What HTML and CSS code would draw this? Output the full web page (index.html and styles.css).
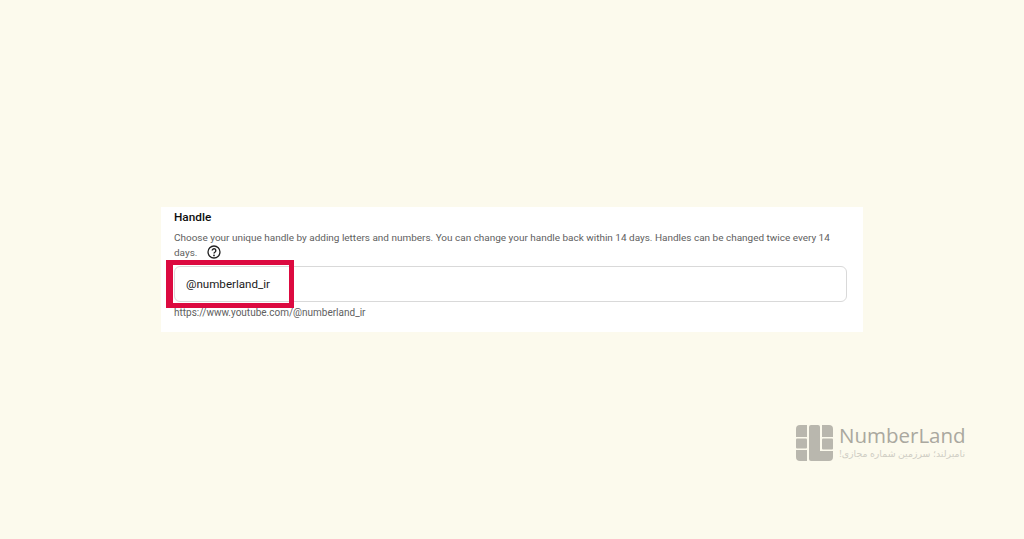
FILE: index.html
```html
<!DOCTYPE html>
<html lang="en">
<head>
<meta charset="utf-8">
<title>Handle</title>
<link rel="stylesheet" href="styles.css">
</head>
<body>
<main class="page">
  <section class="card">
    <h2 class="title">Handle</h2>
    <p class="desc">Choose your unique handle by adding letters and numbers. You can change your handle back within 14 days. Handles can be changed twice every 14 days.<svg class="help" width="14" height="14" viewBox="0 0 14 14" aria-hidden="true"><circle cx="7" cy="7" r="6" fill="none" stroke="#222" stroke-width="1.3"/><path d="M5.2 5.6a1.8 1.8 0 1 1 2.9 1.4c-.7.5-1.1.8-1.1 1.4" fill="none" stroke="#222" stroke-width="1.4"/><circle cx="7" cy="10.4" r=".9" fill="#222"/></svg></p>
    <div class="field">
      <div class="input">@numberland_ir</div>
      <div class="highlight"></div>
    </div>
    <p class="url">https://www.youtube.com/@numberland_ir</p>
  </section>
</main>
<div class="logo">
  <svg class="mark" width="37" height="37" viewBox="0 0 37 37" aria-hidden="true">
    <g fill="#b9b7ae">
      <path d="M0 4a4 4 0 0 1 4-4h7v12H0z"/>
      <rect x="0" y="13.500" width="11" height="10" rx="1"/>
      <path d="M0 25h11v11H4a4 4 0 0 1-4-4z"/>
      <path d="M15 0h7a2 2 0 0 1 2 2v24h13v6a4 4 0 0 1-4 4H15a2 2 0 0 1-2-2V2a2 2 0 0 1 2-2z"/>
      <path d="M26 0h7a4 4 0 0 1 4 4v8H26z"/>
      <rect x="26" y="13.500" width="11" height="11" rx="1"/>
    </g>
  </svg>
  <div class="brand">
    <div class="name">NumberLand</div>
    <div class="tag" dir="rtl" lang="fa">نامبرلند؛ سرزمین شماره مجازی!</div>
  </div>
</div>
</body>
</html>
```
FILE: styles.css
```css
* { box-sizing: border-box; }
html, body { margin: 0; height: 100%; }
body {
  position: relative;
  background: #fcfaed;
  font-family: Roboto, "Liberation Sans", sans-serif;
  overflow: hidden;
}
.page { padding: 207px 161px 0; }
.card {
  width: 702px;
  height: 125px;
  background: #fff;
  padding: 3px 16px 0 13px;
}
.title {
  margin: 0;
  font-size: 11.8px;
  line-height: 14px;
  font-weight: 500;
  color: #0d0d0d;
}
.desc {
  margin: 7px 0 0;
  font-size: 9.97px;
  line-height: 14.5px;
  color: #606060;
}
.help { margin: -5px 0 -5px 10px; vertical-align: 2px; }
.field { position: relative; margin-top: 6px; }
.input {
  height: 36px;
  border: 1px solid #d9d9d9;
  border-radius: 6px;
  padding: 0 11px;
  font-size: 11.6px;
  line-height: 34px;
  color: #1a1a1a;
}
.highlight {
  position: absolute;
  left: -8px;
  top: -6px;
  width: 128px;
  height: 48px;
  border: 5px solid #dc0a40;
  border-left-width: 7px;
}
.url {
  margin: 5px 0 0;
  font-size: 10px;
  line-height: 12px;
  color: #606060;
}
.logo {
  position: absolute;
  left: 796px;
  top: 425px;
  display: flex;
  gap: 6px;
}
.brand { width: 126px; }
.name {
  font-family: "Open Sans", sans-serif;
  font-size: 20.5px;
  font-weight: 400;
  line-height: 21px;
  color: #aaa89f;
}
.tag {
  margin-top: 2px;
  font-family: "Noto Sans", "DejaVu Sans", sans-serif;
  font-size: 9.4px;
  line-height: 12px;
  color: #cfcdc4;
  white-space: nowrap;
}
```
